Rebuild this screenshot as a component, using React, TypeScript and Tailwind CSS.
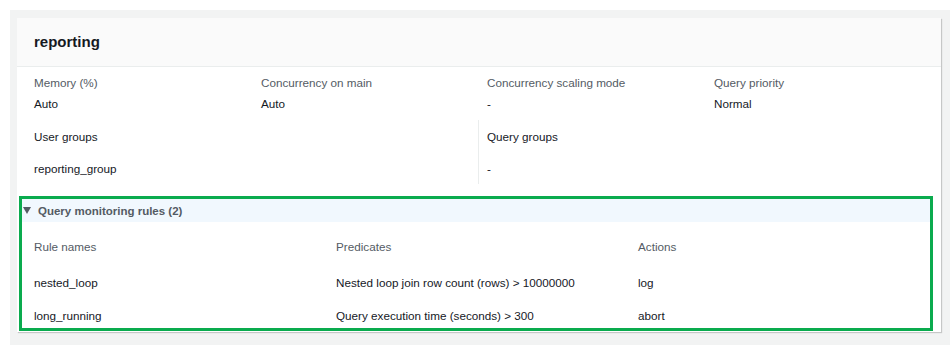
import React from "react";

const font = { fontFamily: '"Liberation Sans", Arial, sans-serif' };

const summary = [
  { label: "Memory (%)", value: "Auto" },
  { label: "Concurrency on main", value: "Auto" },
  { label: "Concurrency scaling mode", value: "-" },
  { label: "Query priority", value: "Normal" },
];

const rules = [
  { name: "nested_loop", predicate: "Nested loop join row count (rows) > 10000000", action: "log" },
  { name: "long_running", predicate: "Query execution time (seconds) > 300", action: "abort" },
];

const App = () => {
  return (
    <div className="min-h-screen bg-white pt-[10px] pl-[10px] text-[11.7px] leading-[16px]" style={font}>
      <div className="h-[335px] bg-[#f2f3f3] pt-[8px] pl-[7px] pr-[9px]">
        <div className="h-[314px] bg-white shadow-[1px_1px_1px_rgba(0,0,0,0.18)]">
          <div className="h-[49px] bg-[#fafafa] border-b border-[#eaeded] px-[17px] flex items-center">
            <h2 className="text-[15px] font-bold text-[#16191f]">reporting</h2>
          </div>

          <div className="grid grid-cols-[227px_226px_227px_1fr] pl-[17px] pt-[8px]">
            {summary.map((s) => (
              <div key={s.label}>
                <div className="text-[#545b64]">{s.label}</div>
                <div className="mt-[5px] text-[#16191f]">{s.value}</div>
              </div>
            ))}
          </div>

          <div className="flex mt-[8px] text-[#16191f]">
            <div className="w-[461px] pl-[17px] pt-[9px] pb-[7px]">
              <div>User groups</div>
              <div className="mt-[16px]">reporting_group</div>
            </div>
            <div className="border-l border-[#eaeded] pl-[8px] pt-[9px] pb-[7px]">
              <div>Query groups</div>
              <div className="mt-[16px]">-</div>
            </div>
          </div>

          <div className="mt-[12px] ml-[2px] mr-[8px] h-[135px] border-[3px] border-[#0aab4e]">
            <div className="h-[23px] bg-[#f1f8fe] flex items-center pl-[1px]">
              <svg width="8" height="7" viewBox="0 0 8 7" className="mr-[7px]">
                <polygon points="0,0 8,0 4,7" fill="#545b64" />
              </svg>
              <span className="font-bold text-[#545b64] text-[11.5px]">Query monitoring rules (2)</span>
            </div>
            <div className="pl-[12px] pt-[17px] grid grid-cols-[302px_302px_1fr]">
              <div className="text-[#545b64]">Rule names</div>
              <div className="text-[#545b64]">Predicates</div>
              <div className="text-[#545b64]">Actions</div>
              {rules.map((r, i) => (
                <React.Fragment key={r.name}>
                  <div className={i === 0 ? "mt-[20px] text-[#16191f]" : "mt-[17px] text-[#16191f]"}>{r.name}</div>
                  <div className={i === 0 ? "mt-[20px] text-[#16191f]" : "mt-[17px] text-[#16191f]"}>{r.predicate}</div>
                  <div className={i === 0 ? "mt-[20px] text-[#16191f]" : "mt-[17px] text-[#16191f]"}>{r.action}</div>
                </React.Fragment>
              ))}
            </div>
          </div>
        </div>
      </div>
    </div>
  );
};

export default App;
